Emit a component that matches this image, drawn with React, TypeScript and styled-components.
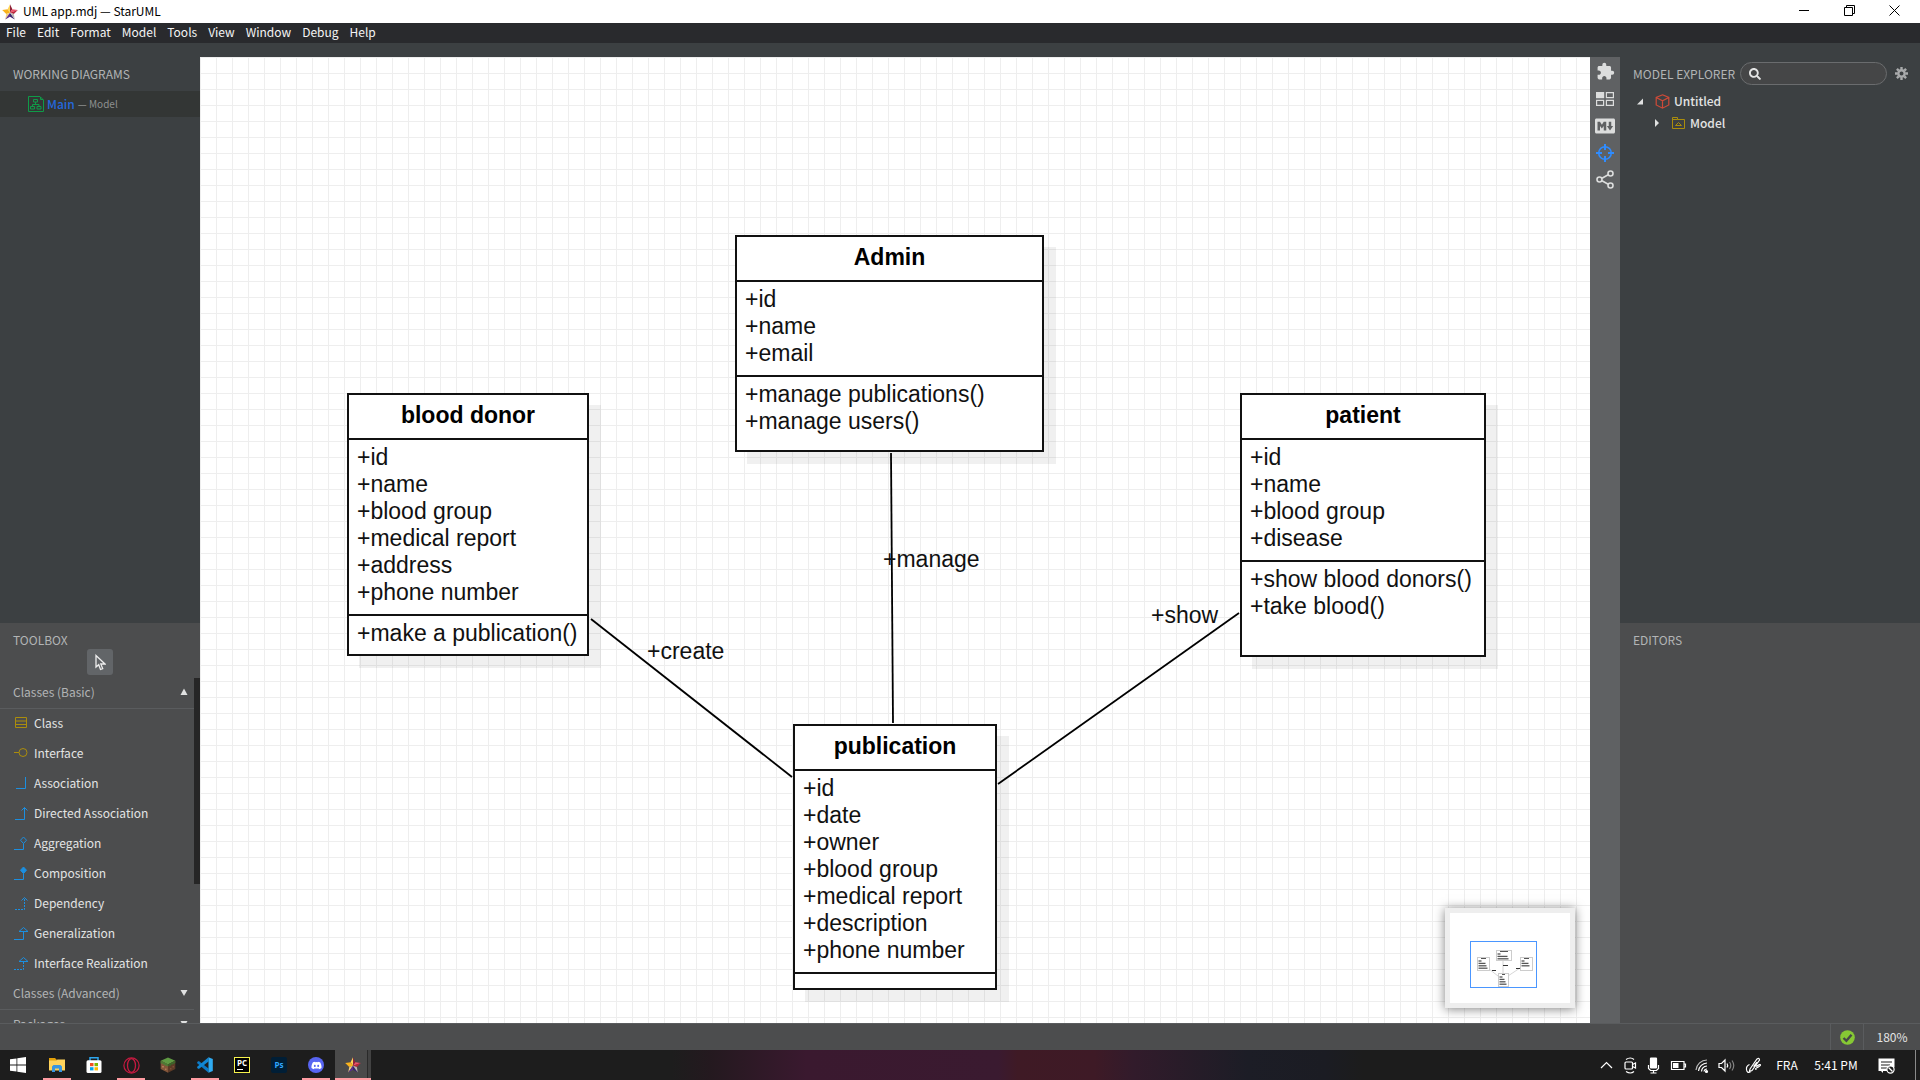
import React from "react";
import styled, { createGlobalStyle, css } from "styled-components";
import { MdExtension } from "react-icons/md";
import { IoLogoMarkdown } from "react-icons/io5";
import { FaSearch, FaDiscord } from "react-icons/fa";

const uiFont = '"Noto Sans CJK SC", "Noto Sans", sans-serif';
const systemFont = '"Noto Sans CJK SC", "Open Sans", sans-serif';
const diagramFont = '"Liberation Sans", Arial, sans-serif';

const color = {
  menu: "#292a2d",
  shell: "#3c4042",
  panel: "#4c4d4e",
  strip: "#5f6163",
  line: "#5a5c5e",
  heading: "#b2b4b5",
  text: "#e3e4e4",
  gold: "#ab8d0c",
  blue: "#1c8fe0",
};

const GlobalStyle = createGlobalStyle`
  *, *::before, *::after { box-sizing: border-box; }
  body { margin: 0; background: ${color.shell}; }
  button, input { font: inherit; color: inherit; margin: 0; }
  button { background: none; border: 0; padding: 0; text-align: left; }
  ul, ol { list-style: none; margin: 0; padding: 0; }
  h1, h2, h3 { margin: 0; font-weight: 400; }
  svg { display: block; flex: none; }
`;

const Window = styled.div`
  display: flex;
  flex-direction: column;
  height: 100vh;
  font: 400 12px/18px ${uiFont};
  color: ${color.text};
  background: ${color.shell};
  overflow: hidden;
`;

/* ---------- title bar and menu ---------- */

const TitleBar = styled.header`
  display: flex;
  align-items: center;
  flex: none;
  height: 23px;
  padding: 0 3px 0 2px;
  background: #fff;
  color: #000;
  font-family: ${systemFont};
`;

const Title = styled.h1`
  flex: 1;
  padding: 0 0 2px 5px;
  font-size: 12px;
  line-height: 18px;
`;

const WindowButton = styled.button`
  display: grid;
  place-items: center;
  width: 45px;
  height: 23px;
  padding-bottom: 2px;
`;

const MenuBar = styled.nav`
  display: flex;
  flex: none;
  height: 20px;
  background: ${color.menu};
  color: #f4f4f4;
  font-family: ${systemFont};
`;

const MenuButton = styled.button`
  padding: 0 5px 2px 6px;
  line-height: 18px;
`;

/* ---------- main area ---------- */

const Workspace = styled.main`
  display: grid;
  grid-template-columns: 200px minmax(0, 1fr) 30px 300px;
  grid-template-rows: minmax(0, 1fr);
  flex: 1;
  min-height: 0;
`;

const Sidebar = styled.aside`
  display: grid;
  grid-template-rows: minmax(0, 58fr) minmax(0, 40fr);
  min-height: 0;
`;

const UpperPanel = styled.section`
  padding-top: 14px;
  background: ${color.shell};
`;

const LowerPanel = styled.section`
  display: flex;
  flex-direction: column;
  background: ${color.panel};
`;

const PanelTitle = styled.h2<{ $spaced?: boolean }>`
  padding: 8px 13px ${(p) => (p.$spaced ? 8 : 0)}px;
  font-size: 12px;
  line-height: 18px;
  color: ${color.heading};
  white-space: nowrap;
`;

const DiagramItem = styled.button`
  display: flex;
  align-items: center;
  gap: 3px;
  width: 100%;
  height: 26px;
  padding: 0 28px;
  background: #333635;
`;

const DiagramName = styled.span`
  font-weight: 500;
  color: #2468dc;
`;

const DiagramOwner = styled.span`
  font-size: 10px;
  color: #8e9090;
`;

const SelectTool = styled.button`
  display: grid;
  place-items: center;
  align-self: center;
  flex: none;
  width: 26px;
  height: 26px;
  margin-bottom: 3px;
  border-radius: 3px;
  background: #626568;
`;

const ToolScroll = styled.div`
  display: flex;
  flex: 1;
  min-height: 0;
  overflow: hidden;
`;

const ToolGroups = styled.div`
  flex: 1;
  min-width: 0;
`;

const ScrollThumb = styled.div`
  width: 6px;
  height: 206px;
  background: #262626;
`;

const GroupHeader = styled.button`
  display: flex;
  align-items: center;
  justify-content: space-between;
  width: 100%;
  height: 31px;
  padding: 0 6px 2px 13px;
  border-bottom: 1px solid ${color.line};
  color: ${color.heading};
`;

const ToolButton = styled.button`
  display: flex;
  align-items: center;
  gap: 4px;
  width: 100%;
  height: 30px;
  padding: 0 13px 2px;
`;

/* ---------- canvas ---------- */

const Canvas = styled.div`
  position: relative;
  margin-top: 14px;
  overflow: hidden;
  background-color: #fff;
  background-image: linear-gradient(#eee 1px, transparent 1px),
    linear-gradient(to right, #eee 1px, transparent 1px);
  background-size: 16px 16px;
  font: 400 23px/27px ${diagramFont};
  color: #111;
`;

const Links = styled.svg`
  position: absolute;
  inset: 0;
  width: 100%;
  height: 100%;
  stroke: #000;
  stroke-width: 1.8;
`;

type Place = { x: number; y: number };

const ClassBox = styled.article<{ $at: Place; $width: number; $height: number }>`
  position: absolute;
  left: ${(p) => p.$at.x}px;
  top: ${(p) => p.$at.y}px;
  display: flex;
  flex-direction: column;
  width: ${(p) => p.$width}px;
  height: ${(p) => p.$height}px;
  border: 2px solid #111;
  background: #fff;
  box-shadow: 12px 12px 0 rgba(0, 0, 0, 0.06);
`;

const ClassName = styled.h3`
  padding: 7px 8px 9px;
  font-size: 23px;
  line-height: 27px;
  font-weight: 700;
  text-align: center;
  color: #000;
`;

const Compartment = styled.ul`
  padding: 4px 8px 8px;
  border-top: 2px solid #111;
  white-space: nowrap;

  &:last-child {
    flex: 1;
    padding-bottom: 0;
  }
`;

const LinkLabel = styled.span<{ $at: Place }>`
  position: absolute;
  left: ${(p) => p.$at.x}px;
  top: ${(p) => p.$at.y}px;
`;

const MiniMap = styled.div`
  position: absolute;
  right: 15px;
  bottom: 15px;
  border: 5px solid #eee;
  background: #fff;
  box-shadow: 0 1px 10px rgba(0, 0, 0, 0.5);
`;

/* ---------- right side ---------- */

const ToolStrip = styled.nav`
  display: flex;
  flex-direction: column;
  align-items: center;
  margin-top: 14px;
  padding-top: 1px;
  background: ${color.strip};
  color: #dcdddd;
`;

const StripButton = styled.button`
  display: grid;
  place-items: center;
  width: 30px;
  height: 27px;
`;

const ExplorerHead = styled.div`
  display: flex;
  align-items: center;
  height: 33px;
  padding-right: 12px;
`;

const ExplorerTitle = styled.h2`
  padding: 0 5px 0 13px;
  font-size: 12px;
  line-height: 18px;
  color: ${color.heading};
  white-space: nowrap;
`;

const SearchField = styled.label`
  display: flex;
  align-items: center;
  gap: 6px;
  flex: 1;
  min-width: 0;
  height: 23px;
  padding: 0 8px;
  margin-right: 8px;
  border: 1px solid #6a6c6e;
  border-radius: 12px;
  background: #454647;

  input {
    width: 100%;
    min-width: 0;
    padding: 0;
    border: 0;
    outline: 0;
    background: transparent;
  }
`;

const TreeRow = styled.button<{ $level: number }>`
  display: grid;
  grid-template-columns: 15px 15px auto;
  align-items: center;
  justify-content: start;
  column-gap: 4px;
  width: 100%;
  height: 22px;
  padding-left: ${(p) => 16 + p.$level * 16}px;
  font-weight: 500;
`;

/* ---------- status bar and taskbar ---------- */

const StatusBar = styled.footer`
  display: flex;
  justify-content: flex-end;
  flex: none;
  height: 27px;
  border-top: 1px solid ${color.line};
  background: ${color.panel};
`;

const StatusCell = styled.button<{ $width: number }>`
  display: grid;
  place-items: center;
  width: ${(p) => p.$width}px;
  border-left: 1px solid ${color.line};
`;

const Taskbar = styled.footer`
  display: flex;
  flex: none;
  height: 30px;
  padding-right: 4px;
  background: linear-gradient(
    to right,
    #1d1d1d 0 35%,
    #24191f 37%,
    #3a192f 42%,
    #3a1a30 52%,
    #3f1a25 53%,
    #3e1a26 57%,
    #321b2b 59%,
    #1c1d26 65%,
    #1b1c23 69%,
    #1c1c1c 71%
  );
  color: #fff;
  font-family: ${systemFont};
`;

const Apps = styled.div`
  display: flex;
  gap: 1px;
  flex: 1;
`;

const StartButton = styled.button`
  display: grid;
  place-items: center;
  width: 38px;
  padding-right: 2px;
`;

const AppButton = styled.button<{ $state?: "running" | "active" }>`
  display: grid;
  place-items: center;
  width: 36px;
  ${(p) =>
    p.$state === "running" &&
    css`
      background: linear-gradient(#ff9ca2, #ff9ca2) bottom / 28px 2px no-repeat;
    `}
  ${(p) =>
    p.$state === "active" &&
    css`
      background: linear-gradient(to right, #4a4a4a 32px, #2a2a2a 32px 33px, #424242 33px);
      border-bottom: 2px solid #ff9ca2;
      padding-top: 2px;
    `}
`;

const Tray = styled.div`
  display: flex;
  border-right: 1px solid #8a8a8a;
`;

const TrayButton = styled.button<{ $width: number }>`
  display: grid;
  place-items: center;
  width: ${(p) => p.$width}px;
`;

const NotificationButton = styled(TrayButton)`
  padding-right: 10px;
`;

/* ---------- drawings ---------- */

const StarLogo = () => (
  <svg width="16" height="16" viewBox="0 0 16 16" aria-hidden="true">
    <path d="M8 .3 8 8.7 5.600 5.200Z" fill="#ffd55a" />
    <path d="M8 .3 10.400 5.200 8 8.700Z" fill="#8e2338" />
    <path d="M5.600 5.200.2 6 4.300 9.900 8 8.700Z" fill="#f9b21c" />
    <path d="M10.400 5.200 15.800 6 8 8.700Z" fill="#f0506a" />
    <path d="M15.800 6 11.800 9.900 8 8.700Z" fill="#b9273c" />
    <path d="M4.300 9.900 3.200 15.500 8 8.700Z" fill="#f1cf84" />
    <path d="M3.200 15.500 8 12.700 8 8.700Z" fill="#5a2d8f" />
    <path d="M8 12.700 12.800 15.500 8 8.700Z" fill="#39246e" />
    <path d="M11.800 9.900 12.800 15.500 8 8.700Z" fill="#b8b4b0" />
  </svg>
);

const DiagramIcon = () => (
  <svg width="16" height="16" viewBox="0 0 16 16" fill="none" stroke="#0f9b48" aria-hidden="true">
    <path d="M.5.5H12L15.500 4V15.500H.5ZM12.500 1V3.500H15" />
    <path d="M5.500 3.500h4v2.500h-4ZM7.500 6v2.500M4.500 10.500v-2h6.500v2M2.500 10.500h4v2.500h-4ZM9 10.500h4v2.500h-4Z" />
  </svg>
);

const CursorIcon = () => (
  <svg width="12" height="17" viewBox="0 0 12 17" fill="none" stroke="#eee" strokeWidth="1.300" aria-hidden="true">
    <path d="M2 1.500V13L4.700 10.700 6.500 15.500 8.700 14.600 6.800 10H11Z" />
  </svg>
);

const Arrow = ({ points }: { points: string }) => (
  <svg width="8" height="8" viewBox="0 0 8 8" fill="#e0e1e1" aria-hidden="true">
    <polygon points={points} />
  </svg>
);

const UP = "0.500,7 7.500,7 4,0.500";
const DOWN = "0.500,1 7.500,1 4,7";

type ToolKind =
  | "class" | "interface" | "association" | "directed" | "aggregation"
  | "composition" | "dependency" | "generalization" | "realization";

const toolShapes: Record<ToolKind, React.ReactNode> = {
  class: <path d="M2.500 1.500h11v10h-11ZM2.500 5h11M2.500 8.500h11" />,
  interface: <><path d="M1 6.500H6" /><circle cx="10" cy="6.500" r="4" /></>,
  association: <path d="M3 12.500H12.500V1" />,
  directed: <path d="M2 13.500H11.500V1.500M8.500 4.500 11.500 1.500 14.500 4.500" />,
  aggregation: <path d="M1 13.500H10.500V7.500M10.500 1 13.500 4.200 10.500 7.500 7.500 4.200Z" />,
  composition: <><path d="M1 13.500H10.500V7.500" /><path d="M10.500 1 13.500 4.200 10.500 7.500 7.500 4.200Z" fill={color.blue} /></>,
  dependency: <><path d="M2 13.500H11.500V2" strokeDasharray="2 1" /><path d="M8.500 4.500 11.500 1.500 14.500 4.500" /></>,
  generalization: <path d="M1 13.500H10.500V6M6 5.500H15L10.500 1.500Z" />,
  realization: <><path d="M1 13.500H10.500V6" strokeDasharray="2 1" /><path d="M6 5.500H15L10.500 1.500Z" /></>,
};

const ToolIcon = ({ kind }: { kind: ToolKind }) => (
  <svg
    width="17" height="15" viewBox="0 0 17 15" fill="none"
    stroke={kind === "class" || kind === "interface" ? color.gold : color.blue}
    aria-hidden="true"
  >
    {toolShapes[kind]}
  </svg>
);

const ThumbnailIcon = () => (
  <svg width="18" height="14" viewBox="0 0 18 14" fill="none" stroke="#dcdddd" strokeWidth="1.200" aria-hidden="true">
    <path d="M.6.6h7v5h-7Z" fill="#dcdddd" />
    <path d="M10.400.6h7v5h-7ZM.6 8.400h7v5h-7ZM10.400 8.400h7v5h-7Z" />
  </svg>
);

const TargetIcon = () => (
  <svg width="18" height="18" viewBox="0 0 18 18" fill="none" stroke="#2f8cff" strokeWidth="1.600" aria-hidden="true">
    <circle cx="9" cy="9" r="6.300" />
    <path d="M9 0V6M9 12V18M0 9H6M12 9H18" strokeWidth="2" />
  </svg>
);

const ShareIcon = () => (
  <svg width="18" height="19" viewBox="0 0 18 19" fill="none" stroke="#dcdddd" strokeWidth="1.600" aria-hidden="true">
    <circle cx="3.500" cy="9.500" r="2.500" />
    <circle cx="14.500" cy="3.500" r="2.500" />
    <circle cx="14.500" cy="15.500" r="2.500" />
    <path d="M6 8.200 12.200 4.800M6 10.800 12.200 14.200" />
  </svg>
);

const GearIcon = () => (
  <svg width="13" height="13" viewBox="0 0 13 13" stroke="#a9abac" fill="none" aria-hidden="true">
    <circle cx="6.500" cy="6.500" r="3.200" strokeWidth="2.400" />
    <path
      d="M6.500 0V2.500M6.500 10.500V13M0 6.500H2.500M10.500 6.500H13M1.900 1.900 3.700 3.700M9.300 9.300 11.100 11.100M11.100 1.900 9.300 3.700M3.700 9.300 1.900 11.100"
      strokeWidth="2.400"
    />
  </svg>
);

const CubeIcon = () => (
  <svg width="15" height="15" viewBox="0 0 15 15" fill="none" stroke="#cf4a38" strokeWidth="1.200" aria-hidden="true">
    <path d="M7.500.8 13.800 3.500V11L7.500 14.200 1.200 11V3.500ZM1.200 3.500 7.500 6.800 13.800 3.500M7.500 6.800V14.200" />
  </svg>
);

const PackageIcon = () => (
  <svg width="15" height="12" viewBox="0 0 15 12" fill="none" stroke={color.gold} aria-hidden="true">
    <path d="M1.500 11.500V.5H6.500V2.500H13.500V11.500ZM1.500 2.500H6.500M4.500 8.500 7.500 5.500 10.500 8.500Z" />
  </svg>
);

const MiniMapDrawing = () => {
  const boxes = [
    { x: 27, y: 44, w: 12, h: 13, rows: 4 },
    { x: 46, y: 37, w: 15, h: 10, rows: 3 },
    { x: 48, y: 60, w: 10, h: 13, rows: 4 },
    { x: 70, y: 44, w: 12, h: 13, rows: 3 },
  ];
  return (
    <svg width="120" height="90" viewBox="0 0 120 90" aria-label="Diagram overview" role="img">
      <path d="M39 56 48 63M53 47V60M58 63 70 55" stroke="#ccc" fill="none" strokeWidth=".8" />
      {boxes.map((b) => (
        <g key={`${b.x}-${b.y}`}>
          <rect x={b.x + 0.5} y={b.y + 0.5} width={b.w} height={b.h} fill="#fff" stroke="#ccc" />
          <path d={`M${b.x + 4} ${b.y + 1.5}h${b.w - 7}`} stroke="#555" />
          {Array.from({ length: b.rows }, (_, i) => (
            <path
              key={i}
              d={`M${b.x + 1.5} ${b.y + 4 + i * 2.4}h${i === 0 ? 3 : b.w - 6 + i}`}
              stroke="#555"
              strokeWidth="1.300"
            />
          ))}
        </g>
      ))}
      <path d="M42 57.500h4M53 52.500h5M66 55.500h4" stroke="#333" />
      <rect x="20.500" y="28.500" width="66" height="46" fill="none" stroke="#4a96ff" />
    </svg>
  );
};

const WindowsIcon = () => (
  <svg width="16" height="16" viewBox="0 0 16 16" fill="#fff" aria-hidden="true">
    <path d="M0 2.300 6.500 1.400V7.600H0ZM7.300 1.300 16 0V7.600H7.300ZM0 8.400H6.500V14.600L0 13.700ZM7.300 8.400H16V16L7.300 14.700Z" />
  </svg>
);

const ExplorerIcon = () => (
  <svg width="16" height="16" viewBox="0 0 16 16" aria-hidden="true">
    <path d="M0 1h6l1.500 1.500V5H0Z" fill="#e3a008" />
    <path d="M0 3.500H7L8.500 2.500H16V13.500H0Z" fill="#ffd35c" />
    <path d="M3 9.500 4.500 8H11.500L13 9.500V15H10V11.500H6V15H3Z" fill="#3a96e0" />
  </svg>
);

const StoreIcon = () => (
  <svg width="16" height="16" viewBox="0 0 16 16" aria-hidden="true">
    <path d="M4 4V.8H12V4" fill="none" stroke="#2da7f0" strokeWidth="1.500" />
    <rect x=".5" y="3.200" width="15" height="12.800" rx="1.500" fill="#fff" />
    <path d="M4 6h3.500v3.200H4Z" fill="#f25022" />
    <path d="M8.500 6H12v3.200H8.500Z" fill="#7fba00" />
    <path d="M4 10.200h3.500v3.200H4Z" fill="#00a4ef" />
    <path d="M8.500 10.200H12v3.200H8.500Z" fill="#ffb900" />
  </svg>
);

const OperaIcon = () => (
  <svg width="17" height="17" viewBox="0 0 17 17" fill="none" stroke="#c41a40" aria-hidden="true">
    <circle cx="8.500" cy="8.500" r="7.600" strokeWidth="1.200" />
    <ellipse cx="8.500" cy="8.500" rx="4" ry="6.800" strokeWidth="1.300" />
  </svg>
);

const GrassBlockIcon = () => (
  <svg width="16" height="16" viewBox="0 0 16 16" aria-hidden="true">
    <path d="M8 .5 15.300 3.800 8 7.500.7 3.800Z" fill="#5f9a43" />
    <path d="M.7 3.800 8 7.500V15.700L.7 12Z" fill="#84563a" />
    <path d="M15.300 3.800 8 7.500V15.700L15.300 12Z" fill="#5c3a27" />
    <path d="M.7 3.800 8 7.500V9.500L6 8.200V9.300L4 7.200V8L2.500 6.500.7 6.500Z" fill="#4b7d35" />
    <path d="M15.300 3.800 8 7.500V9.500L10 8.200V9.300L12 7V7.800L15.300 6Z" fill="#3c642a" />
    <path d="M2 9h2v1.500H2ZM5 11.500h1.500V13H5Z" fill="#b07b55" />
    <path d="M10 11h1.500v1.500H10ZM12.500 9H14v1.500h-1.500Z" fill="#7b4f36" />
  </svg>
);

const CodeIcon = () => (
  <svg width="16" height="16" viewBox="0 0 16 16" aria-hidden="true">
    <path d="M1.800 4 .2 5V6.200L11.500 15.800V11.600Z" fill="#0b79c6" />
    <path d="M.2 9.800V11L1.800 12 11.500 4.400V.2Z" fill="#1187d4" />
    <path d="M11.500.2 15.800 2V14L11.500 15.800Z" fill="#2fabf2" />
  </svg>
);

const BoxText = styled.span<{ $variant: "pycharm" | "photoshop" }>`
  display: block;
  width: 16px;
  height: 16px;
  overflow: hidden;
  font: 700 8px/10px "Open Sans", sans-serif;
  text-align: center;
  ${(p) =>
    p.$variant === "pycharm"
      ? css`
          border: 1px solid #f6f24c;
          background: linear-gradient(#fff, #fff) 2px 11px / 6px 1px no-repeat #000;
        `
      : css`
          border-radius: 2px;
          background: #001e36;
          color: #31a8ff;
          line-height: 16px;
        `}
`;

const DiscordMark = styled.span`
  display: grid;
  place-items: center;
  width: 16px;
  height: 16px;
  border-radius: 50%;
  background: #5865f2;
`;

const trayIcon = (body: React.ReactNode) => (
  <svg width="17" height="17" viewBox="0 0 17 17" fill="none" stroke="#fff" strokeWidth="1.200" aria-hidden="true">
    {body}
  </svg>
);

/* ---------- data ---------- */

const menus = ["File", "Edit", "Format", "Model", "Tools", "View", "Window", "Debug", "Help"];

const basicTools: { kind: ToolKind; label: string }[] = [
  { kind: "class", label: "Class" },
  { kind: "interface", label: "Interface" },
  { kind: "association", label: "Association" },
  { kind: "directed", label: "Directed Association" },
  { kind: "aggregation", label: "Aggregation" },
  { kind: "composition", label: "Composition" },
  { kind: "dependency", label: "Dependency" },
  { kind: "generalization", label: "Generalization" },
  { kind: "realization", label: "Interface Realization" },
];

const classes = [
  {
    name: "Admin",
    at: { x: 535, y: 178 }, width: 309, height: 217,
    attributes: ["+id", "+name", "+email"],
    operations: ["+manage publications()", "+manage users()"],
  },
  {
    name: "blood donor",
    at: { x: 147, y: 336 }, width: 242, height: 263,
    attributes: ["+id", "+name", "+blood group", "+medical report", "+address", "+phone number"],
    operations: ["+make a publication()"],
  },
  {
    name: "patient",
    at: { x: 1040, y: 336 }, width: 246, height: 264,
    attributes: ["+id", "+name", "+blood group", "+disease"],
    operations: ["+show blood donors()", "+take blood()"],
  },
  {
    name: "publication",
    at: { x: 593, y: 667 }, width: 204, height: 266,
    attributes: ["+id", "+date", "+owner", "+blood group", "+medical report", "+description", "+phone number"],
    operations: [],
  },
];

const links = [
  { label: "+create", at: { x: 447, y: 581 }, path: "M391 562 592 720" },
  { label: "+manage", at: { x: 683, y: 489 }, path: "M691 396 693 666" },
  { label: "+show", at: { x: 951, y: 545 }, path: "M1039 556 798 727" },
];

const apps: { name: string; icon: React.ReactNode; state?: "running" | "active" }[] = [
  { name: "File Explorer", icon: <ExplorerIcon />, state: "running" },
  { name: "Store", icon: <StoreIcon /> },
  { name: "Opera", icon: <OperaIcon />, state: "running" },
  { name: "Minecraft", icon: <GrassBlockIcon /> },
  { name: "Code", icon: <CodeIcon />, state: "running" },
  { name: "PyCharm", icon: <BoxText $variant="pycharm">PC</BoxText> },
  { name: "Photoshop", icon: <BoxText $variant="photoshop">Ps</BoxText> },
  { name: "Discord", icon: <DiscordMark><FaDiscord size={11} color="#fff" /></DiscordMark>, state: "running" },
  { name: "StarUML", icon: <StarLogo />, state: "active" },
];

const tray: { name: string; width: number; icon: React.ReactNode }[] = [
  { name: "Show hidden icons", width: 26, icon: trayIcon(<path d="M3 11 8.500 5.500 14 11" />) },
  {
    name: "Meet now", width: 22,
    icon: trayIcon(<><rect x="3" y="5" width="7.500" height="7" rx="1" /><path d="M10.500 7.500 13.500 6V11L10.500 9.500M4 2.500Q8.500-.5 12 2.500M4 14.500Q8.500 17.500 12 14.500" /></>),
  },
  {
    name: "Microphone", width: 24,
    icon: trayIcon(<><rect x="5.500" y="1" width="6" height="10" rx=".5" fill="#fff" /><path d="M3.500 8V11.500L5.500 13.500H11.500L13.500 11.500V8M8.500 13.500V16M5.500 16H11.500" /></>),
  },
  {
    name: "Battery", width: 26,
    icon: trayIcon(<><path d="M1.500 4.500H14V12.500H1.500ZM14.500 7H15.500V10H14.500" /><path d="M3 6H8.500V11H3Z" fill="#fff" stroke="none" /></>),
  },
  {
    name: "Network", width: 23,
    icon: trayIcon(<><path d="M2 13A11 11 0 0 1 13 3" opacity=".7" /><path d="M4.500 14A9 9 0 0 1 13 6M7.500 14.500A6 6 0 0 1 13 9M10 14.500A3 3 0 0 1 13 12" /><circle cx="12.500" cy="14.500" r="1" fill="#fff" /></>),
  },
  {
    name: "Volume", width: 24,
    icon: trayIcon(<><path d="M1 6.500H3.500L7 3V14L3.500 10.500H1Z" /><path d="M9 6.500Q10.300 8.500 9 10.500" /><path d="M11.500 5Q14 8.500 11.500 12M14 3.500Q17.500 8.500 14 13.500" opacity=".45" /></>),
  },
  {
    name: "Ink workspace", width: 31,
    icon: trayIcon(<path d="M5 12 12 2Q14.500.5 14.500 3L7 13.500 4.500 14.500ZM4.500 7.500Q1 9 1.500 12.500 2 16.500 5.500 15M8.500 9.500 12 5M11 9.500Q15.500 6.500 15.500 8 15.500 9 11.500 11 9.500 12 11.500 12.500" />),
  },
];

export default function App() {
  return (
    <Window>
      <GlobalStyle />
      <TitleBar>
        <StarLogo />
        <Title>UML app.mdj — StarUML</Title>
        <WindowButton aria-label="Minimize">
          <svg width="11" height="11" viewBox="0 0 11 11" stroke="#000"><path d="M0 5.500H10" /></svg>
        </WindowButton>
        <WindowButton aria-label="Restore">
          <svg width="11" height="11" viewBox="0 0 11 11" stroke="#000" fill="none">
            <path d="M.5 2.500H8.500V10.500H.5ZM2.500 2.500V.5H10.500V8.500H8.500" />
          </svg>
        </WindowButton>
        <WindowButton aria-label="Close">
          <svg width="11" height="11" viewBox="0 0 11 11" stroke="#000"><path d="M.5.5 10.500 10.500M10.500.5.5 10.500" /></svg>
        </WindowButton>
      </TitleBar>
      <MenuBar>
        {menus.map((m) => <MenuButton key={m}>{m}</MenuButton>)}
      </MenuBar>

      <Workspace>
        <Sidebar>
          <UpperPanel>
            <PanelTitle $spaced>WORKING DIAGRAMS</PanelTitle>
            <DiagramItem>
              <DiagramIcon />
              <DiagramName>Main</DiagramName>
              <DiagramOwner>— Model</DiagramOwner>
            </DiagramItem>
          </UpperPanel>
          <LowerPanel>
            <PanelTitle>TOOLBOX</PanelTitle>
            <SelectTool aria-label="Select"><CursorIcon /></SelectTool>
            <ToolScroll>
              <ToolGroups>
                <GroupHeader>Classes (Basic)<Arrow points={UP} /></GroupHeader>
                {basicTools.map((t) => (
                  <ToolButton key={t.kind}>
                    <ToolIcon kind={t.kind} />
                    {t.label}
                  </ToolButton>
                ))}
                <GroupHeader>Classes (Advanced)<Arrow points={DOWN} /></GroupHeader>
                <GroupHeader>Packages<Arrow points={DOWN} /></GroupHeader>
              </ToolGroups>
              <ScrollThumb />
            </ToolScroll>
          </LowerPanel>
        </Sidebar>

        <Canvas>
          {classes.map((c) => (
            <ClassBox key={c.name} $at={c.at} $width={c.width} $height={c.height}>
              <ClassName>{c.name}</ClassName>
              <Compartment>{c.attributes.map((a) => <li key={a}>{a}</li>)}</Compartment>
              <Compartment>{c.operations.map((o) => <li key={o}>{o}</li>)}</Compartment>
            </ClassBox>
          ))}
          <Links aria-hidden="true">
            {links.map((l) => <path key={l.label} d={l.path} />)}
          </Links>
          {links.map((l) => <LinkLabel key={l.label} $at={l.at}>{l.label}</LinkLabel>)}
          <MiniMap><MiniMapDrawing /></MiniMap>
        </Canvas>

        <ToolStrip>
          <StripButton aria-label="Extensions"><MdExtension size={19} /></StripButton>
          <StripButton aria-label="Thumbnails"><ThumbnailIcon /></StripButton>
          <StripButton aria-label="Markdown"><IoLogoMarkdown size={20} /></StripButton>
          <StripButton aria-label="Navigator"><TargetIcon /></StripButton>
          <StripButton aria-label="Relationships"><ShareIcon /></StripButton>
        </ToolStrip>

        <Sidebar>
          <UpperPanel>
            <ExplorerHead>
              <ExplorerTitle>MODEL EXPLORER</ExplorerTitle>
              <SearchField>
                <FaSearch size={12} />
                <input type="text" aria-label="Search model" />
              </SearchField>
              <button aria-label="Explorer settings"><GearIcon /></button>
            </ExplorerHead>
            <TreeRow $level={0}><Arrow points="1,7.500 7,7.500 7,1.500" /><CubeIcon />Untitled</TreeRow>
            <TreeRow $level={1}><Arrow points="3,0 7,4 3,8" /><PackageIcon />Model</TreeRow>
          </UpperPanel>
          <LowerPanel>
            <PanelTitle>EDITORS</PanelTitle>
          </LowerPanel>
        </Sidebar>
      </Workspace>

      <StatusBar>
        <StatusCell $width={33} aria-label="Validation passed">
          <svg width="15" height="15" viewBox="0 0 15 15" fill="none">
            <circle cx="7.500" cy="7.500" r="7.300" fill="#86c834" />
            <path d="M3.500 8 6.400 10.800 11.500 4.800" stroke="#454647" strokeWidth="2.400" />
          </svg>
        </StatusCell>
        <StatusCell $width={57}>180%</StatusCell>
      </StatusBar>

      <Taskbar>
        <Apps>
          <StartButton aria-label="Start"><WindowsIcon /></StartButton>
          {apps.map((a) => (
            <AppButton key={a.name} $state={a.state} aria-label={a.name}>{a.icon}</AppButton>
          ))}
        </Apps>
        <Tray>
          {tray.map((t) => (
            <TrayButton key={t.name} $width={t.width} aria-label={t.name}>{t.icon}</TrayButton>
          ))}
          <TrayButton $width={36}>FRA</TrayButton>
          <TrayButton $width={62}>5:41 PM</TrayButton>
          <NotificationButton $width={48} aria-label="Notifications">
            {trayIcon(
              <>
                <path d="M.5 1.500H16.500V10L13 14H5V16L3 14H.5Z" fill="#fff" stroke="none" />
                <path d="M3 5H14M3 8H12M3 11H9" stroke="#1c1c1c" />
                <circle cx="12.500" cy="12.500" r="3.600" fill="#1c1c1c" />
                <path d="M10.500 10.500 14.500 14.500" />
              </>
            )}
          </NotificationButton>
        </Tray>
      </Taskbar>
    </Window>
  );
}
